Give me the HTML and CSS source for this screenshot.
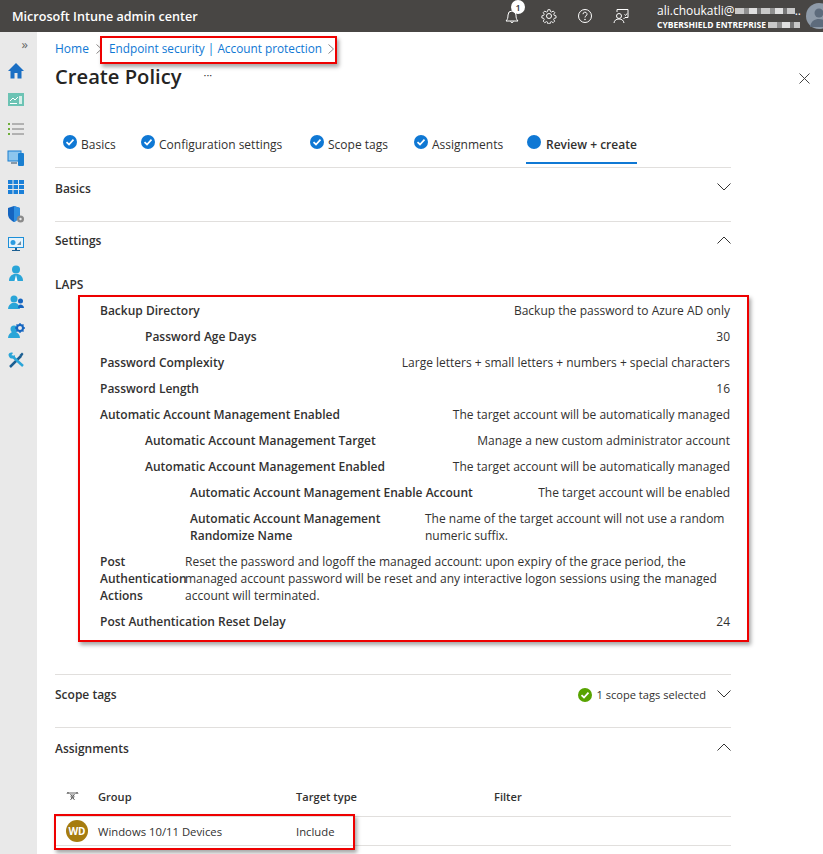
FILE: index.html
```html
<!DOCTYPE html>
<html lang="en">
<head>
<meta charset="utf-8">
<title>Create Policy</title>
<link rel="stylesheet" href="styles.css">
</head>
<body>
<header class="topbar">
  <div class="brand">Microsoft Intune admin center</div>
  <div class="top-icons">
    <span class="ti bell">
      <svg width="18" height="18" viewBox="0 0 18 18" fill="none" stroke="#fff" stroke-width="1"><path d="M3 14h12c-1.500-1.500-2-3-2-6a4 4 0 0 0-8 0c0 3-.5 4.500-2 6zM7.500 14.500a1.600 1.600 0 0 0 3 0"/></svg>
      <span class="badge">1</span>
    </span>
    <span class="ti">
      <svg width="16" height="16" viewBox="0 0 16 16" fill="none" stroke="#fff" stroke-width="1"><circle cx="8" cy="8" r="2.500"/><path d="M6.800 1h2.400l.4 2 1.300.6 1.800-1.100 1.700 1.700-1.100 1.800.5 1.300 2 .5v2.400l-2 .4-.6 1.300 1.100 1.800-1.700 1.700-1.800-1.100-1.300.5-.4 2H6.800l-.4-2-1.300-.5-1.800 1.100-1.700-1.700 1.100-1.800-.6-1.300-2-.4V7.800l2-.5.6-1.300-1.100-1.800 1.700-1.700 1.800 1.100 1.300-.6z" transform="translate(.8 .8) scale(.9)"/></svg>
    </span>
    <span class="ti">
      <svg width="16" height="16" viewBox="0 0 16 16" fill="none" stroke="#fff" stroke-width="1"><circle cx="8" cy="8" r="6.500"/><path d="M6 6.200a2 2 0 1 1 3 1.700c-.7.400-1 .8-1 1.600"/><circle cx="8" cy="11.500" r=".4"/></svg>
    </span>
    <span class="ti">
      <svg width="16" height="16" viewBox="0 0 16 16" fill="none" stroke="#fff" stroke-width="1"><path d="M4 4V1.500h11v8h-3l-1.500 1.500M11.500 6.500l1 1 1.500-2"/><circle cx="6" cy="8" r="2.500"/><path d="M1 15c.3-2.500 2-4 5-4s4.500 1.500 5 4"/></svg>
    </span>
  </div>
  <div class="account">
    <div class="acc-name">ali.choukatli@<span class="blur blur-a"></span>..</div>
    <div class="acc-org">CYBERSHIELD ENTREPRISE <span class="blur blur-b"></span></div>
  </div>
  <div class="avatar"><svg width="26" height="26" viewBox="0 0 26 26"><circle cx="13" cy="13" r="13" fill="#8e9aa8"/><circle cx="13" cy="10" r="4.500" fill="#5d6b7c"/><path d="M4 24c1-6 4.500-8 9-8s8 2 9 8z" fill="#5d6b7c"/></svg></div>
</header>

<div class="shell">
  <nav class="rail">
    <div class="collapse">»</div>
    <svg class="ri" viewBox="0 0 18 18"><path d="M9 1 1 9h2.500v7.500H7.500V11h3v5.500h4V9H17z" fill="#1a6fc4"/></svg>
    <svg class="ri" viewBox="0 0 18 18"><rect x="1" y="2" width="16" height="13" fill="#6cc3b4"/><path d="M3 10l3-3 2 2 3-3" stroke="#fff" fill="none"/><rect x="12" y="5" width="3" height="8" fill="#d6efe9"/><rect x="3" y="12" width="7" height="1" fill="#fff"/></svg>
    <svg class="ri" viewBox="0 0 18 18"><path d="M5 4h12M5 9h12M5 14h12" stroke="#7a7a7a" stroke-width="1"/><path d="M1 4h2M1 9h2M1 14h2" stroke="#6fae3b" stroke-width="2"/></svg>
    <svg class="ri" viewBox="0 0 18 18"><rect x="1" y="2" width="13" height="10" fill="#8cc6ee" stroke="#1a7fd0"/><rect x="4" y="13" width="6" height="2" fill="#8a9aa8"/><rect x="11" y="4" width="6" height="13" rx="1" fill="#1a7fd0"/></svg>
    <svg class="ri" viewBox="0 0 18 18"><path d="M1 2h4.500v4H1zM6.500 2H11v4H6.500zM12 2h5v4h-5zM1 7h4.500v4H1zM6.500 7H11v4H6.500zM12 7h5v4h-5zM1 12h4.500v4H1zM6.500 12H11v4H6.500zM12 12h5v4h-5z" fill="#1a7fd8"/></svg>
    <svg class="ri" viewBox="0 0 18 18"><path d="M7 0l6 2v6c0 4-3 6.500-6 8-3-1.500-6-4-6-8V2z" fill="#1565c0"/><path d="M7 0l6 2v6c0 4-3 6.500-6 8z" fill="#2f8fe0"/><circle cx="13.500" cy="13" r="3.500" fill="#8a8a8a"/><circle cx="13.500" cy="13" r="1.200" fill="#e8e8e8"/></svg>
    <svg class="ri" viewBox="0 0 18 18"><rect x="1" y="2" width="16" height="11" fill="#1d8fd8"/><rect x="2" y="3" width="14" height="9" fill="#e6f3fb"/><circle cx="6" cy="7.500" r="2.500" fill="#2a9be0"/><path d="M10 10l4-4v4z" fill="#6b90a8"/><path d="M8 13h2v2h3v1H5v-1h3z" fill="#1c5f92"/></svg>
    <svg class="ri" viewBox="0 0 18 18"><circle cx="9" cy="5.500" r="4" fill="#2aa5d8"/><path d="M2 17c0-4 2-6 5-7h4c3 1 5 3 5 7z" fill="#2aa5d8"/><path d="M9 11l-1.500 6h3z" fill="#fff"/></svg>
    <svg class="ri" viewBox="0 0 18 18"><circle cx="7" cy="6" r="3.500" fill="#2aa5d8"/><path d="M1 16c0-3 2-5 4-6h4c2 1 4 3 4 6z" fill="#2aa5d8"/><circle cx="13.500" cy="8" r="2.500" fill="#1565c0"/><path d="M11 15c0-2 1-3.500 2.500-3.500S17 13 17 15z" fill="#1565c0"/></svg>
    <svg class="ri" viewBox="0 0 18 18"><circle cx="7" cy="7" r="3.500" fill="#2aa5d8"/><path d="M1 16c0-3 2-5 4-6h4c2 1 4 3 4 6z" fill="#2aa5d8"/><circle cx="13" cy="6" r="3" fill="none" stroke="#1565c0" stroke-width="2"/><path d="M13 1v2M13 9v2M8 6h2M16 6h2M9.500 2.500l1 1M15.500 8.500l1 1M9.500 9.500l1-1M15.500 3.500l1-1" stroke="#1565c0" stroke-width="1.300"/></svg>
    <svg class="ri" viewBox="0 0 18 18"><path d="M3 16L14 5" stroke="#1c5f92" stroke-width="2.500"/><path d="M15 1.500l1.500 1.500-2 3-2-2z" fill="#1c5f92"/><path d="M16 15L5 5" stroke="#2aa5d8" stroke-width="2.500"/><path d="M1.500 3.500C2 2 4 1 6 2L4.500 4 6 5.500 8 4c.5 2-1 4-3.500 3.500C3 7.500 1.500 5.500 1.500 3.500z" fill="#2aa5d8"/></svg>
  </nav>

  <main class="main">
    <div class="crumbs">
      <a class="link link-home">Home</a><svg class="sep" viewBox="0 0 6 10"><path d="M.5.500 5.500 5 .5 9.500"/></svg><a class="link">Endpoint security | Account protection</a><svg class="sep" viewBox="0 0 6 10"><path d="M.5.500 5.500 5 .5 9.500"/></svg>
    </div>
    <div class="title-row">
      <h1 class="title">Create Policy</h1>
      <span class="more">···</span>
    </div>
    <button class="close" aria-label="Close"><svg width="11" height="11" viewBox="0 0 11 11" stroke="#444" fill="none"><path d="M.5.500l10 10M10.500.500l-10 10"/></svg></button>

    <div class="tabs">
      <div class="tab t1"><svg class="tick" viewBox="0 0 14 14"><circle cx="7" cy="7" r="7" fill="#0f78d4"/><path d="M3.500 7.200l2.500 2.300 4.500-4.800" stroke="#fff" stroke-width="1.700" fill="none"/></svg>Basics</div>
      <div class="tab t2"><svg class="tick" viewBox="0 0 14 14"><circle cx="7" cy="7" r="7" fill="#0f78d4"/><path d="M3.500 7.200l2.500 2.300 4.500-4.800" stroke="#fff" stroke-width="1.700" fill="none"/></svg>Configuration settings</div>
      <div class="tab t3"><svg class="tick" viewBox="0 0 14 14"><circle cx="7" cy="7" r="7" fill="#0f78d4"/><path d="M3.500 7.200l2.500 2.300 4.500-4.800" stroke="#fff" stroke-width="1.700" fill="none"/></svg>Scope tags</div>
      <div class="tab t4"><svg class="tick" viewBox="0 0 14 14"><circle cx="7" cy="7" r="7" fill="#0f78d4"/><path d="M3.500 7.200l2.500 2.300 4.500-4.800" stroke="#fff" stroke-width="1.700" fill="none"/></svg>Assignments</div>
      <div class="tab tab-active"><svg class="tick" viewBox="0 0 14 14"><circle cx="7" cy="7" r="7" fill="#0f78d4"/></svg>Review + create</div>
    </div>

    <section class="sec sec-basics">
      <div class="sec-head"><span>Basics</span><svg class="chev" viewBox="0 0 14 8"><path d="M.5.500 7 7 13.500.500"/></svg></div>
    </section>

    <section class="sec sec-settings">
      <div class="sec-head"><span>Settings</span><svg class="chev" viewBox="0 0 14 8"><path d="M.5 7.500 7 1l6.500 6.500"/></svg></div>
      <div class="laps">LAPS</div>
      <div class="rows">
        <div class="row"><div class="k">Backup Directory</div><div class="v">Backup the password to Azure AD only</div></div>
        <div class="row l1"><div class="k">Password Age Days</div><div class="v">30</div></div>
        <div class="row"><div class="k">Password Complexity</div><div class="v">Large letters + small letters + numbers + special characters</div></div>
        <div class="row"><div class="k">Password Length</div><div class="v">16</div></div>
        <div class="row"><div class="k">Automatic Account Management Enabled</div><div class="v">The target account will be automatically managed</div></div>
        <div class="row l1"><div class="k">Automatic Account Management Target</div><div class="v">Manage a new custom administrator account</div></div>
        <div class="row l1"><div class="k">Automatic Account Management Enabled</div><div class="v">The target account will be automatically managed</div></div>
        <div class="row l2"><div class="k">Automatic Account Management Enable Account</div><div class="v">The target account will be enabled</div></div>
        <div class="row l2"><div class="k k-wrap">Automatic Account Management Randomize Name</div><div class="v v-wrap">The name of the target account will not use a random numeric suffix.</div></div>
        <div class="row"><div class="k k-narrow">Post Authentication Actions</div><div class="v v-long">Reset the password and logoff the managed account: upon expiry of the grace period, the managed account password will be reset and any interactive logon sessions using the managed account will terminated.</div></div>
        <div class="row"><div class="k">Post Authentication Reset Delay</div><div class="v">24</div></div>
      </div>
    </section>

    <section class="sec sec-scope">
      <div class="sec-head"><span>Scope tags</span>
        <span class="scope-state"><svg class="ok" viewBox="0 0 14 14"><circle cx="7" cy="7" r="7" fill="#57a300"/><path d="M3.500 7.200l2.500 2.300 4.500-4.800" stroke="#fff" stroke-width="1.800" fill="none"/></svg>1 scope tags selected</span>
        <svg class="chev" viewBox="0 0 14 8"><path d="M.5.500 7 7 13.500.500"/></svg></div>
    </section>

    <section class="sec sec-assign">
      <div class="sec-head"><span>Assignments</span><svg class="chev" viewBox="0 0 14 8"><path d="M.5 7.500 7 1l6.500 6.500"/></svg></div>
      <div class="grid grid-head">
        <div class="c-ic"><svg width="13" height="11" viewBox="0 0 13 11" fill="none" stroke="#666"><path d="M1 3l1-2 1 2M10 3l1-2 1 2M3 2h7M4.500 3l4 6M8.500 3l-4 6"/><circle cx="6.500" cy="5.500" r="1.500"/></svg></div>
        <div class="c-group">Group</div><div class="c-type">Target type</div><div class="c-filter">Filter</div>
      </div>
      <div class="grid grid-row">
        <div class="c-ic"><span class="wd">WD</span></div>
        <div class="c-group">Windows 10/11 Devices</div><div class="c-type">Include</div><div class="c-filter"></div>
      </div>
    </section>

    <div class="mark mark-crumb"></div>
    <div class="mark mark-rows"></div>
    <div class="mark mark-row"></div>
  </main>
</div>
</body>
</html>
```

FILE: styles.css
```css
* { box-sizing: border-box; }
html, body { margin: 0; height: 854px; overflow: hidden; }
body {
  font-family: "Open Sans", "Noto Sans", sans-serif;
  font-size: 12px;
  color: #323130;
  background: #fff;
}
.topbar {
  height: 32px;
  background: #484644;
  color: #fff;
  display: flex;
  align-items: center;
  padding-left: 12px;
}
.brand { font-weight: 600; font-size: 12.6px; flex: 1; }
.top-icons { display: flex; align-items: center; gap: 20px; margin-right: 28px; }
.ti { display: flex; position: relative; }
.badge {
  position: absolute; left: 8px; top: -7px;
  width: 14px; height: 14px; border-radius: 50%;
  background: #fff; color: #333; font-size: 9px; font-weight: 600;
  display: flex; align-items: center; justify-content: center;
}
.account { width: 149px; }
.acc-name { font-size: 12px; line-height: 15px; white-space: nowrap; padding-top: 1px; }
.acc-org { font-size: 8.5px; font-weight: 700; white-space: nowrap; line-height: 13px; }
.blur { display: inline-block; vertical-align: middle; height: 6px; background: repeating-linear-gradient(90deg,#c9c9c9 0 9px,#8f8f8f 9px 14px,#e0e0e0 14px 22px,#777 22px 26px); }
.blur-a { width: 60px; }
.blur-b { width: 32px; }
.avatar { width: 17px; overflow: hidden; display: flex; }
.avatar svg { flex: none; }

.shell { display: flex; height: 822px; }
.rail {
  width: 37px; flex: none; background: #e9e9e9;
  display: flex; flex-direction: column; align-items: center;
  padding: 2px 5px 0 0;
}
.collapse { align-self: flex-end; margin-right: 4px; font-size: 13px; line-height: 20px; color: #666; }
.ri { width: 18px; height: 18px; margin-bottom: 10.9px; flex: none; }
.collapse + .ri { margin-top: 8px; }

.main { flex: 1; position: relative; padding: 0 92px 0 18px; min-width: 0; }
.crumbs { display: flex; align-items: center; height: 32px; font-size: 11.8px; }
.link { color: #0f78d4; }
.link-home { font-size: 12px; }
.sep { width: 6px; height: 10px; margin: 1px 7px 0; fill: none; stroke: #8a8886; flex: none; }
.sep:last-child { margin-left: 6px; }
.title-row { display: flex; align-items: center; height: 27px; margin-top: -1px; }
.title { margin: 0; font-size: 20.2px; font-weight: 600; color: #252423; line-height: 27px; }
.more { margin-left: 22px; font-size: 11px; color: #333; margin-top: -4px; }
.close { position: absolute; top: 41px; right: 13px; border: 0; padding: 0; background: none; display: flex; }

.tabs { display: flex; height: 78px; align-items: flex-start; padding-top: 38px; border-bottom: 1px solid #e1dfdd; }
.tab { display: flex; align-items: center; height: 36px; padding: 0 0 4px; font-size: 12px; white-space: nowrap; }
.t1 { padding-left: 8px; width: 86px; }
.t2 { width: 169px; }
.t3 { width: 104px; }
.t4 { width: 112px; }
.tab-active { border-bottom: 2px solid #0f78d4; font-weight: 600; padding: 0 1px 2px; width: 111px; }
.tick { width: 14px; height: 14px; margin-right: 4px; margin-top: -4px; flex: none; }
.tab-active .tick { margin-right: 5px; }

.sec { border-bottom: 1px solid #e1dfdd; }
.sec-head { display: flex; align-items: flex-start; height: 53px; padding-top: 10px; line-height: 20px; font-weight: 600; font-size: 12px; }
.sec-head > span:first-child { flex: 1; }
.chev { width: 14px; height: 8px; fill: none; stroke: #333; margin-top: 5px; flex: none; }
.sec-basics .sec-head, .sec-assign .sec-head { padding-top: 11px; }
.sec-basics .chev, .sec-assign .chev { margin-top: 4px; }
.sec-settings .sec-head { padding-top: 9px; }
.sec-scope .sec-head { height: 52px; }
.laps { font-weight: 600; line-height: 20px; height: 27px; }
.rows { padding: 0 1px 35px 45px; }
.row { display: flex; justify-content: space-between; align-items: flex-start; line-height: 17px; padding-bottom: 9px; }
.row.l1 { padding-left: 45px; }
.row.l2 { padding-left: 90px; }
.k { font-weight: 600; white-space: nowrap; }
.v { text-align: right; }
.k-wrap { white-space: normal; width: 235px; flex: none; }
.v-wrap, .v-long { text-align: left; flex: 1; }
.k-narrow { white-space: normal; width: 85px; flex: none; }
.scope-state { display: flex; align-items: center; font-weight: 400; margin-right: 11px; font-size: 11.1px; }
.ok { width: 14px; height: 14px; margin-right: 4px; }
.grid { display: grid; grid-template-columns: 43px 198px 198px 1fr; align-items: center; font-size: 11.3px; }
.grid-head { height: 40px; margin-top: -4px; font-weight: 600; font-size: 11.1px; border-bottom: 1px solid #e1dfdd; }
.grid-row { height: 28px; }
.c-ic { padding-left: 11px; display: flex; }
.wd {
  width: 22px; height: 22px; border-radius: 50%; background: #a67c0f; color: #fff;
  font-size: 10px; font-weight: 700; display: flex; align-items: center; justify-content: center;
}
.mark { position: absolute; border: 2px solid #ee0000; box-shadow: 2px 3px 4px rgba(0,0,0,.35); pointer-events: none; }
.mark-crumb { left: 63px; top: 4px; width: 237px; height: 28px; }
.mark-rows { left: 41px; top: 263px; width: 671px; height: 347px; }
.mark-row { left: 17px; top: 782px; width: 301px; height: 36px; }
```
